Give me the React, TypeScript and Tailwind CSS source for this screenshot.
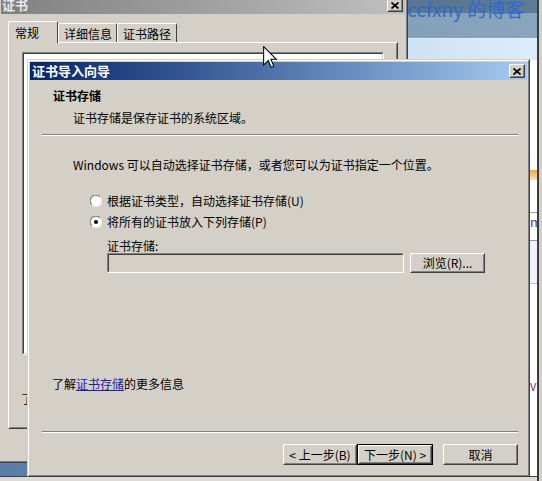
import React from 'react';

// classic win2k-style bevels
const raisedOuter = 'border border-t-white border-l-white border-r-[#404040] border-b-[#404040]';
const raisedInner = 'border border-t-[#d4d0c8] border-l-[#d4d0c8] border-r-[#808080] border-b-[#808080]';
const sunkenOuter = 'border border-t-[#808080] border-l-[#808080] border-r-white border-b-white';
const sunkenInner = 'border border-t-[#404040] border-l-[#404040] border-r-[#d4d0c8] border-b-[#d4d0c8]';

const CloseButton = () => (
  <div className={`flex h-[14px] w-[16px] bg-[#d4d0c8] ${raisedOuter}`}>
    <div className={`flex flex-1 items-center justify-center ${raisedInner}`}>
      <svg width="8" height="7" viewBox="0 0 8 7">
        <path d="M0.5 0.5 L7.5 6.5 M7.5 0.5 L0.5 6.5" stroke="#000" strokeWidth="1.7" />
      </svg>
    </div>
  </div>
);

const PushButton = ({ children, className = '' }: { children: React.ReactNode; className?: string }) => (
  <div className={`flex h-[21px] ${raisedOuter} ${className}`}>
    <div className={`flex flex-1 items-center justify-center text-[12px] leading-[14px] ${raisedInner}`}>
      {children}
    </div>
  </div>
);

const Radio = ({ checked, label }: { checked?: boolean; label: string }) => (
  <div className="flex h-[14px] items-center gap-[5px] text-[12px] leading-[14px]">
    <svg width="12" height="12" viewBox="0 0 12 12">
      <circle cx="6" cy="6" r="5.5" fill="#fff" />
      <path d="M1.8 9.8 A5.2 5.2 0 0 1 9.8 1.8" stroke="#808080" strokeWidth="1.2" fill="none" />
      <path d="M10.2 2.2 A5.2 5.2 0 0 1 2.2 10.2" stroke="#e8e6e2" strokeWidth="1.2" fill="none" />
      {checked && <circle cx="6" cy="6" r="2" fill="#000" />}
    </svg>
    <span>{label}</span>
  </div>
);

const Separator = () => (
  <div className="ml-[12px] mr-[9px] h-[2px] border-t border-t-[#808080] border-b border-b-white" />
);

const BrowserBackdrop = () => (
  <div className="absolute inset-0 flex">
    <div className="flex flex-1 flex-col bg-white">
      <div className="relative z-10 h-[13px] bg-gradient-to-r from-[#4c6279] to-[#5f7b95] pl-[407px]">
        <div className="-mt-[1px] whitespace-nowrap text-[19px] leading-[19px] text-[#3068cc]">ccfxny 的博客</div>
      </div>
      <div className="h-[25px] bg-gradient-to-r from-[#7894ad] to-[#88a5bd]" />
      <div className="h-px bg-[#e2eef8]" />
      <div className="h-[21px] bg-gradient-to-r from-[#a4c4e6] to-[#dcecfa]" />
      <div className="flex flex-1">
        <div className="flex-1 bg-white" />
        <div className="flex w-[7px] flex-col overflow-hidden bg-white">
          <div className="h-[110px]" />
          <div className="h-[10px] bg-gradient-to-b from-[#f0a040] to-[#fbe2c0]" />
          <div className="h-[32px]" />
          <div className="h-px bg-[#9a9a9a]" />
          <div className="h-[27px] pt-[1px] text-[13px] leading-[16px] text-[#5a3a7a]">m</div>
          <div className="h-px bg-[#9a9a9a]" />
          <div className="h-[42px] bg-[#eef4fb]" />
          <div className="h-px bg-[#c4c4c4]" />
          <div className="h-[96px]" />
          <div className="text-[11px] leading-[12px] text-[#8a3058]">V</div>
        </div>
      </div>
      <div className="flex h-[13px]">
        <div className="flex-1 bg-gradient-to-r from-[#5a7ea8] to-[#6c8fb6]" />
        <div className="w-[7px] bg-white" />
      </div>
      <div className="h-[5px] border-t border-t-[#404040] bg-[#dcdad6]" />
    </div>
    <div className="w-[2px] bg-[#3c3c3c]" />
    <div className="w-[3px] bg-[#d4d0c8]" />
  </div>
);

const CertWindow = () => (
  <div className="absolute -left-[2px] -top-[7px] z-20 h-[470px] w-[410px] border border-t-[#d4d0c8] border-l-[#d4d0c8] border-r-[#404040] border-b-[#404040] bg-[#d4d0c8]">
    <div className="flex h-full flex-col border border-t-white border-l-white border-r-[#808080] border-b-[#808080] p-px">
      <div className="flex h-[18px] items-center justify-between bg-gradient-to-r from-[#808080] to-[#c0c0c0] pl-[1px] pr-[2px]">
        <span className="text-[13px] font-bold leading-[14px] text-[#e8e8e8]">证书</span>
        <CloseButton />
      </div>
      <div className="flex flex-col px-[7px] pt-[7px]">
        <div className="flex items-end text-[12px] leading-[14px]">
          <div className="relative z-10 -mb-px h-[22px] w-[50px] rounded-t-[2px] border-l border-t border-r border-l-white border-t-white border-r-[#404040] bg-[#d4d0c8] pl-[6px] pt-[4px]">
            常规
          </div>
          <div className="h-[19px] w-[59px] rounded-t-[2px] border-l border-t border-r border-l-white border-t-white border-r-[#404040] pl-[5px] pt-[3px]">
            详细信息
          </div>
          <div className="h-[19px] w-[60px] rounded-t-[2px] border-l border-t border-r border-l-white border-t-white border-r-[#404040] pl-[5px] pt-[3px]">
            证书路径
          </div>
        </div>
        <div className="h-[387px] border border-t-white border-l-white border-r-[#404040] border-b-[#404040]">
          <div className="flex h-full flex-col border border-t-transparent border-l-transparent border-r-[#808080] border-b-[#808080]">
            <div className={`ml-[12px] mt-[8px] h-[303px] w-[362px] ${sunkenOuter}`}>
              <div className={`h-full bg-white ${sunkenInner}`} />
            </div>
            <div className="ml-[11px] mt-[37px] text-[12px] leading-[14px]">了解证书</div>
          </div>
        </div>
      </div>
    </div>
  </div>
);

const ImportWizard = () => (
  <div className="absolute left-[27px] top-[59px] z-30 h-[418px] w-[503px] border border-t-[#d4d0c8] border-l-[#d4d0c8] border-r-[#404040] border-b-[#404040] bg-[#d4d0c8]">
    <div className="flex h-full flex-col border border-t-white border-l-white border-r-[#808080] border-b-[#808080] p-px">
      <div className="flex h-[18px] items-center justify-between bg-gradient-to-r from-[#0a246a] to-[#a6caf0] pl-[2px] pr-[2px]">
        <span className="text-[13px] font-bold leading-[14px] text-white">证书导入向导</span>
        <CloseButton />
      </div>

      <div className="pl-[23px] pt-[9px] text-[12px] font-bold leading-[14px]">证书存储</div>
      <div className="mt-[8px] pl-[43px] text-[12px] leading-[14px]">证书存储是保存证书的系统区域。</div>
      <div className="mt-[9px]">
        <Separator />
      </div>

      <div className="mt-[22px] pl-[43px] text-[12px] leading-[14px]">
        Windows 可以自动选择证书存储，或者您可以为证书指定一个位置。
      </div>
      <div className="mt-[22px] flex flex-col gap-[7px] pl-[60px]">
        <Radio label="根据证书类型，自动选择证书存储(U)" />
        <Radio checked label="将所有的证书放入下列存储(P)" />
      </div>
      <div className="mt-[10px] pl-[77px] text-[12px] leading-[14px]">证书存储:</div>
      <div className="flex pl-[77px]">
        <div className={`h-[20px] w-[297px] ${sunkenOuter}`}>
          <div className={`h-full bg-[#d4d0c8] ${sunkenInner}`} />
        </div>
        <PushButton className="ml-[6px] !h-[20px] w-[75px]">浏览(R)...</PushButton>
      </div>

      <div className="mt-[104px] pl-[22px] text-[12px] leading-[14px]">
        了解<span className="text-[#1c1ca8] underline">证书存储</span>的更多信息
      </div>

      <div className="mt-[40px]">
        <Separator />
      </div>

      <div className="mt-[11px] flex justify-end pr-[9px]">
        <PushButton className="w-[74px]">&lt; 上一步(B)</PushButton>
        <div className="flex h-[21px] w-[76px] border border-black">
          <PushButton className="!h-[19px] flex-1">下一步(N) &gt;</PushButton>
        </div>
        <PushButton className="ml-[10px] w-[75px]">取消</PushButton>
      </div>
    </div>
  </div>
);

const Cursor = () => (
  <svg className="absolute left-[263px] top-[46px] z-40" width="14" height="22" viewBox="0 0 12 19">
    <polygon
      points="0.5,0.5 0.5,16.5 4.5,12.5 7,18.5 9.3,17.5 6.8,11.5 11.5,11.5"
      fill="#fff"
      stroke="#000"
      strokeWidth="0.9"
      strokeLinejoin="miter"
    />
  </svg>
);

export default function App() {
  return (
    <div className="relative h-[481px] w-[542px] overflow-hidden bg-[#d4d0c8] font-['Noto_Sans_CJK_SC',sans-serif] text-black">
      <BrowserBackdrop />
      <CertWindow />
      <ImportWizard />
      <Cursor />
    </div>
  );
}
